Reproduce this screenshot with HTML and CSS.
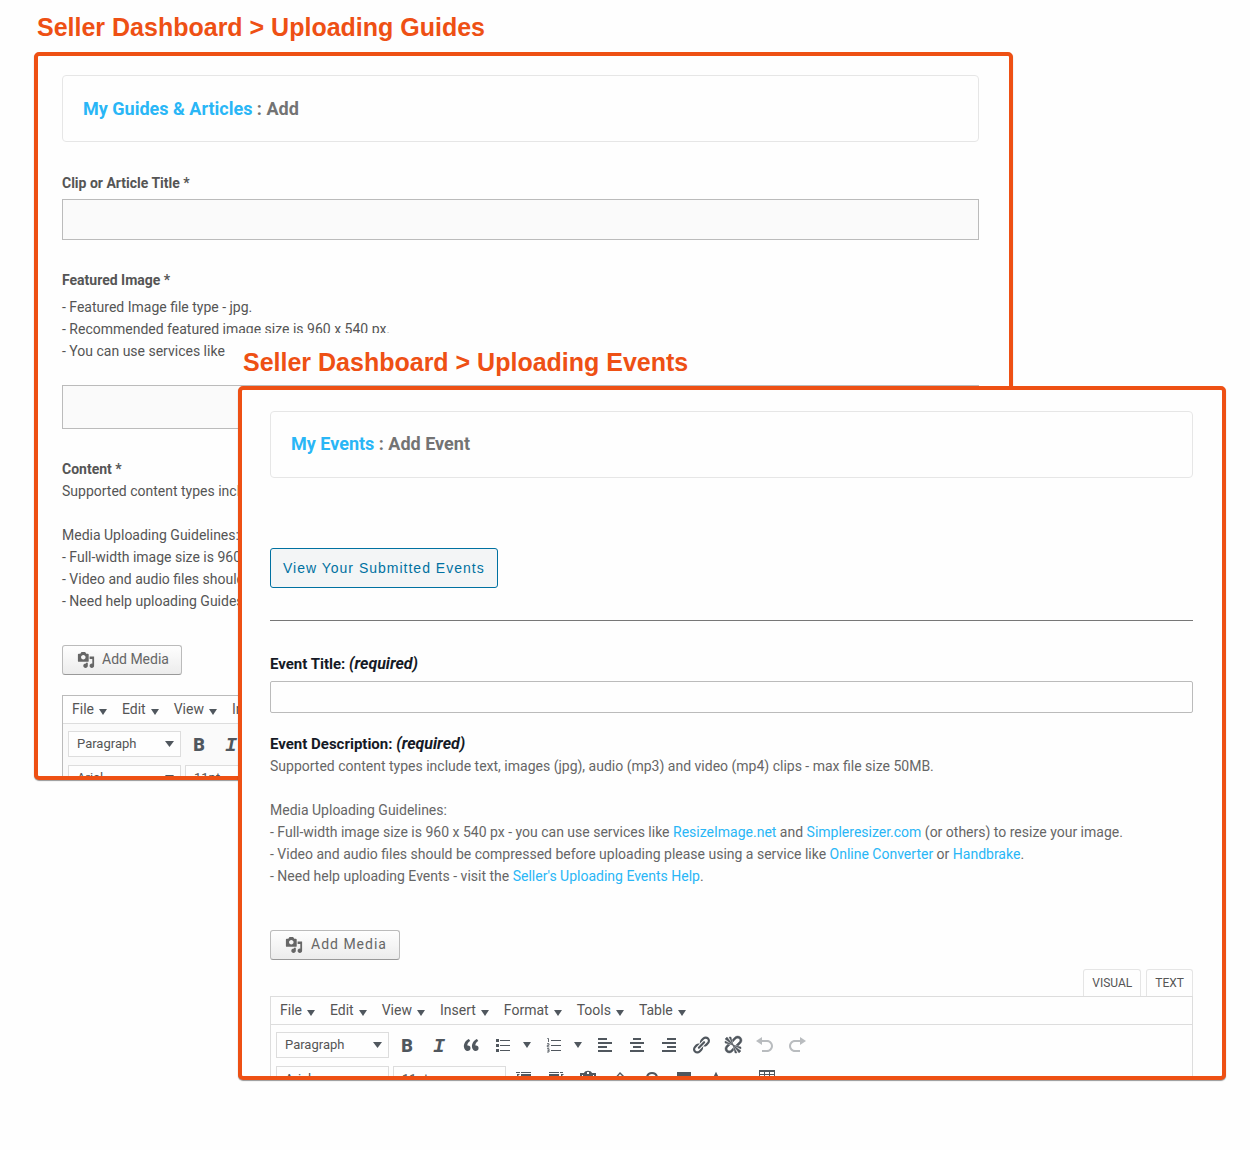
FILE: index.html
```html
<!DOCTYPE html>
<html lang="en">
<head>
<meta charset="utf-8">
<title>Seller Dashboard</title>
<link rel="stylesheet" href="styles.css">
</head>
<body>
<svg class="defs" aria-hidden="true">
  <symbol id="media" viewBox="0 0 20 20"><path d="M13 11V4c0-.55-.45-1-1-1h-1.67L9 1H5L3.67 3H2c-.55 0-1 .45-1 1v7c0 .55.45 1 1 1h10c.55 0 1-.45 1-1zM7 4.5c1.38 0 2.5 1.12 2.5 2.5S8.38 9.5 7 9.5 4.5 8.38 4.5 7 5.62 4.5 7 4.5zM14 6h5v10.5c0 1.38-1.12 2.5-2.5 2.5S14 17.88 14 16.5s1.12-2.5 2.5-2.5c.17 0 .34.02.5.05V9h-3V6zm-4 8.05V13h2v3.5c0 1.38-1.12 2.5-2.5 2.5S7 17.88 7 16.5 8.12 14 9.5 14c.17 0 .34.02.5.05z"/></symbol>
  <symbol id="quote" viewBox="0 0 20 20"><path d="M9.49 13.22c0-.74-.2-1.38-.61-1.9-.62-.78-1.83-.88-2.53-.72-.29-1.65 1.11-3.75 2.92-4.65L7.88 4c-2.73 1.3-5.42 4.28-4.96 8.05C3.21 14.43 4.59 16 6.54 16c.85 0 1.56-.25 2.12-.75s.83-1.18.83-2.03zm8.05 0c0-.74-.2-1.38-.61-1.9-.63-.78-1.83-.88-2.53-.72-.29-1.65 1.11-3.75 2.92-4.65L15.93 4c-2.73 1.3-5.41 4.28-4.95 8.05.29 2.38 1.66 3.95 3.61 3.95.85 0 1.56-.25 2.12-.75s.83-1.18.83-2.03z"/></symbol>
  <symbol id="ul" viewBox="0 0 20 20"><path d="M3 4h3v3H3zM3 9h3v3H3zM3 14h3v3H3zM7 5h10v1H7zM7 10h10v1H7zM7 15h10v1H7z"/></symbol>
  <symbol id="ol" viewBox="0 0 20 20"><path d="M7 5h10v1H7zM7 10h10v1H7zM7 15h10v1H7z"/><path d="M3.300 3.500h1.200v3.500M3 8.700h2v1.600h-1.700v1.600h2M3 13.700h2v3.300h-2M3.500 15.300h1.500" fill="none" stroke="currentColor" stroke-width=".9"/></symbol>
  <symbol id="left" viewBox="0 0 20 20"><path d="M3 3h9v2H3zM3 7h14v2H3zM3 11h9v2H3zM3 15h14v2H3z"/></symbol>
  <symbol id="center" viewBox="0 0 20 20"><path d="M6 3h8v2H6zM3 7h14v2H3zM6 11h8v2H6zM3 15h14v2H3z"/></symbol>
  <symbol id="right" viewBox="0 0 20 20"><path d="M8 3h9v2H8zM3 7h14v2H3zM8 11h9v2H8zM3 15h14v2H3z"/></symbol>
  <symbol id="link" viewBox="0 0 20 20"><path d="M17.74 2.76c1.68 1.69 1.68 4.41 0 6.1l-1.53 1.52c-1.12 1.12-2.7 1.47-4.14 1.09l2.62-2.61.76-.77.76-.76c.84-.84.84-2.2 0-3.04-.84-.85-2.2-.85-3.04 0l-.77.76-3.38 3.38c-.37-1.44-.02-3.02 1.1-4.14l1.52-1.53c1.69-1.68 4.42-1.68 6.1 0zM8.59 13.43l5.34-5.34c.42-.42.42-1.1 0-1.52-.44-.43-1.13-.39-1.53 0l-5.33 5.34c-.42.42-.42 1.1 0 1.52.44.43 1.13.39 1.52 0zm-.76 2.29l4.14-4.15c.38 1.44.03 3.02-1.09 4.14l-1.52 1.53c-1.69 1.68-4.41 1.68-6.1 0-1.68-1.68-1.68-4.42 0-6.1l1.53-1.52c1.12-1.12 2.7-1.47 4.14-1.1l-4.14 4.15c-.85.84-.85 2.2 0 3.05.84.84 2.2.84 3.04 0z"/></symbol>
  <symbol id="unlink" viewBox="0 0 20 20"><path stroke="currentColor" stroke-width=".4" d="M17.74 2.26c1.68 1.69 1.68 4.41 0 6.1l-1.53 1.52c-.32.33-.69.58-1.08.77L13 10l1.69-1.64.76-.77.76-.76c.84-.84.84-2.2 0-3.04-.84-.85-2.2-.85-3.04 0l-.77.76-.76.76L10 7l-.65-2.14c.19-.38.44-.75.77-1.07l1.52-1.53c1.69-1.68 4.42-1.68 6.1 0zM2 4l8 6-6-8zm4-2l4 8-2-8H6zM2 6l8 4-8-2V6zm7.36 7.69L10 13l.74 2.35-1.38 1.39c-1.69 1.68-4.41 1.68-6.1 0-1.68-1.68-1.68-4.42 0-6.1l1.39-1.38L7 10l-.69.64-1.52 1.53c-.85.84-.85 2.2 0 3.04.84.85 2.2.85 3.04 0zM18 16l-8-6 6 8zm-4 2l-4-8 2 8h2zm4-4l-8-4 8 2v2z"/></symbol>
  <symbol id="undo" viewBox="0 0 20 20"><path d="M12 5H7V2L1 6l6 4V7h5c2.200 0 4 1.800 4 4s-1.800 4-4 4H7v2h5c3.300 0 6-2.700 6-6s-2.700-6-6-6z"/></symbol>
  <symbol id="redo" viewBox="0 0 20 20"><path d="M8 5h5V2l6 4-6 4V7H8c-2.200 0-4 1.800-4 4s1.800 4 4 4h5v2H8c-3.300 0-6-2.700-6-6s2.700-6 6-6z"/></symbol>
  <symbol id="outdent" viewBox="0 0 20 20"><path d="M2 3h4v1H2zM7 3h10v1H7zM3 5h3L3 8zM7 5h10v2H7zM7 9h10v2H7zM7 13h10v2H7z"/></symbol>
  <symbol id="indent" viewBox="0 0 20 20"><path d="M14 3h3v1h-3zM3 3h10v1H3zM15 5h3l-3 3zM3 5h10v2H3zM3 9h10v2H3zM3 13h10v2H3z"/></symbol>
  <symbol id="paste" viewBox="0 0 20 20"><path d="M6 4c1-3 7-3 8 0h4v14H2V4zM4 6v10h12V6h-1v2H5V6zM9 3v2h2V3z" fill-rule="evenodd"/></symbol>
  <symbol id="eraser" viewBox="0 0 20 20"><path d="M10 3l6 6-7 8-6-6zM10 5l-5 6 4 4 5-6z" fill-rule="evenodd"/></symbol>
  <symbol id="omega" viewBox="0 0 20 20"><path d="M4 16h4c-5-4-4-12 2-12s7 8 2 12h4" fill="none" stroke="currentColor" stroke-width="2"/></symbol>
  <symbol id="block" viewBox="0 0 20 20"><path d="M3 3h14v12H3z"/></symbol>
  <symbol id="color" viewBox="0 0 20 20"><path d="M5 15l5-10 5 10M7 12h6" fill="none" stroke="currentColor" stroke-width="2"/></symbol>
  <symbol id="table" viewBox="0 0 20 20"><path d="M2 1h16v15H2zM3 3v2h4V3zM8 3v2h4V3zM13 3v2h4V3zM3 6v9h4V6zM8 6v9h4V6zM13 6v9h4V6z" fill-rule="evenodd"/></symbol>
</svg>
<main class="stage">
  <section class="shot guides">
    <h1 class="caption">Seller Dashboard &gt; Uploading Guides</h1>
    <div class="panel">
      <h2 class="crumb"><a href="#">My Guides &amp; Articles</a> : Add</h2>
      <label class="label" for="clip">Clip or Article Title *</label>
      <input class="field" id="clip" type="text">
      <label class="label" for="image">Featured Image *</label>
      <p class="copy hint">- Featured Image file type - jpg.<br>- Recommended featured image size is 960 x 540 px.<br>- You can use services like</p>
      <input class="field tall" id="image" type="text">
      <h3 class="label">Content *</h3>
      <p class="copy">Supported content types include</p>
      <p class="copy rules">Media Uploading Guidelines:<br>- Full-width image size is 960<br>- Video and audio files should<br>- Need help uploading Guides</p>
      <button class="media" type="button"><svg><use href="#media"/></svg>Add Media</button>
      <div class="editor">
        <div class="menubar">
          <button type="button">File</button><button type="button">Edit</button><button type="button">View</button><button type="button">Insert</button>
        </div>
        <div class="tools">
          <select aria-label="Block format"><option>Paragraph</option></select>
          <button class="tool bold" type="button">B</button>
          <button class="tool italic" type="button">I</button>
        </div>
        <div class="tools cut">
          <select aria-label="Font family"><option>Arial</option></select>
          <select aria-label="Font size"><option>11pt</option></select>
        </div>
      </div>
    </div>
  </section>

  <section class="shot events">
    <h1 class="caption">Seller Dashboard &gt; Uploading Events</h1>
    <div class="panel">
      <h2 class="crumb"><a href="#">My Events</a> : Add Event</h2>
      <button class="submitted" type="button">View Your Submitted Events</button>
      <hr class="rule">
      <label class="label" for="title">Event Title: <em>(required)</em></label>
      <input class="field" id="title" type="text">
      <h3 class="label desc">Event Description: <em>(required)</em></h3>
      <p class="copy">Supported content types include text, images (jpg), audio (mp3) and video (mp4) clips - max file size 50MB.</p>
      <p class="copy rules">Media Uploading Guidelines:<br>- Full-width image size is 960 x 540 px - you can use services like <a href="#">ResizeImage.net</a> and <a href="#">Simpleresizer.com</a> (or others) to resize your image.<br>- Video and audio files should be compressed before uploading please using a service like <a href="#">Online Converter</a> or <a href="#">Handbrake</a>.<br>- Need help uploading Events - visit the <a href="#">Seller's Uploading Events Help</a>.</p>
      <button class="media" type="button"><svg><use href="#media"/></svg>Add Media</button>
      <div class="tabs"><button type="button">VISUAL</button><button type="button">TEXT</button></div>
      <div class="editor">
        <div class="menubar">
          <button type="button">File</button><button type="button">Edit</button><button type="button">View</button><button type="button">Insert</button><button type="button">Format</button><button type="button">Tools</button><button type="button">Table</button>
        </div>
        <div class="tools">
          <select aria-label="Block format"><option>Paragraph</option></select>
          <button class="tool bold" type="button">B</button>
          <button class="tool italic" type="button">I</button>
          <button class="tool" type="button" aria-label="Blockquote"><svg><use href="#quote"/></svg></button>
          <button class="tool" type="button" aria-label="Bulleted list"><svg><use href="#ul"/></svg></button>
          <button class="more" type="button" aria-label="Bullet styles"></button>
          <button class="tool" type="button" aria-label="Numbered list"><svg><use href="#ol"/></svg></button>
          <button class="more" type="button" aria-label="Number styles"></button>
          <button class="tool" type="button" aria-label="Align left"><svg><use href="#left"/></svg></button>
          <button class="tool" type="button" aria-label="Align center"><svg><use href="#center"/></svg></button>
          <button class="tool" type="button" aria-label="Align right"><svg><use href="#right"/></svg></button>
          <button class="tool" type="button" aria-label="Insert link"><svg><use href="#link"/></svg></button>
          <button class="tool" type="button" aria-label="Remove link"><svg><use href="#unlink"/></svg></button>
          <button class="tool" type="button" aria-label="Undo" disabled><svg><use href="#undo"/></svg></button>
          <button class="tool" type="button" aria-label="Redo" disabled><svg><use href="#redo"/></svg></button>
        </div>
        <div class="tools cut">
          <select aria-label="Font family"><option>Arial</option></select>
          <select aria-label="Font size"><option>11pt</option></select>
          <button class="tool" type="button" aria-label="Decrease indent"><svg><use href="#outdent"/></svg></button>
          <button class="tool" type="button" aria-label="Increase indent"><svg><use href="#indent"/></svg></button>
          <button class="tool" type="button" aria-label="Paste as text"><svg><use href="#paste"/></svg></button>
          <button class="tool" type="button" aria-label="Clear formatting"><svg><use href="#eraser"/></svg></button>
          <button class="tool" type="button" aria-label="Special character"><svg><use href="#omega"/></svg></button>
          <button class="tool" type="button" aria-label="Horizontal line"><svg><use href="#block"/></svg></button>
          <button class="tool" type="button" aria-label="Text color"><svg><use href="#color"/></svg></button>
          <button class="more" type="button" aria-label="Color choices"></button>
          <button class="tool" type="button" aria-label="Table"><svg><use href="#table"/></svg></button>
        </div>
      </div>
    </div>
  </section>
</main>
</body>
</html>
```
FILE: styles.css
```css
* { box-sizing: border-box; }

body {
  margin: 0;
  background: #fefefe;
  color: #555;
  font: 14px/22px Roboto, sans-serif;
}

h1, h2, h3, p { margin: 0; }
a { color: #29b6f6; text-decoration: none; }
button, input, select { font: inherit; color: inherit; margin: 0; }
svg { fill: currentColor; display: block; }
.defs { position: absolute; width: 0; height: 0; }

/* The two captioned panels share one grid cell and overlap. */
.stage {
  display: grid;
  align-items: start;
  padding-bottom: 70px;
}

.shot { grid-area: 1 / 1; min-width: 0; }
.guides { margin: 0 237px 0 34px; }
.events { margin: 333px 24px 0 228px; }

.caption {
  color: #ee5014;
  font: bold 25px/52px "Liberation Sans", sans-serif;
  padding: 1px 0 0 3px;
  height: 52px;
}
.events .caption {
  width: fit-content;
  background: #fefefe;
  padding: 3px 15px 0;
}

.panel {
  display: flex;
  flex-direction: column;
  overflow: hidden;
  background: #fefefe;
  border: 4px solid #ee5014;
  border-radius: 5px;
  box-shadow: 0 1px 1px #0006;
}
.guides .panel { padding: 19px 30px 0 24px; }
.events .panel { padding: 21px 29px 0 28px; margin: 1px 0 0 10px; }

.crumb {
  border: 1px solid #e6e6e6;
  border-radius: 4px;
  padding: 22px 20px 21px;
  font-size: 18px;
  line-height: 22px;
  font-weight: 700;
  color: #737373;
}
.events .crumb { padding: 21px 20px 22px; }

.label { font-size: 14px; font-weight: 700; line-height: 22px; }
.guides .label { margin-top: 29px; }
.guides .crumb + .label { margin-top: 30px; }
.events .label { color: #151a26; font-size: 15px; }
.events .label em { font-size: 16px; line-height: 20px; }
.events .desc { margin-top: 20px; }

.field {
  height: 41px;
  margin-top: 5px;
  padding: 4px 10px;
  background: #fafafa;
  border: 1px solid #bbb;
}
.guides .tall { height: 44px; margin-top: 23px; }
.events .field {
  height: 32px;
  margin-top: 6px;
  background: #fefefe;
  border-radius: 2px;
}

.hint { margin-top: 5px; }
.rules { margin-top: 22px; }
.events .copy { color: #666; }

.submitted {
  align-self: flex-start;
  height: 40px;
  margin-top: 70px;
  padding: 0 12px;
  font: 14px/20px "Liberation Sans", sans-serif;
  letter-spacing: 1px;
  color: #0071a1;
  background: #f3f5f6;
  border: 1px solid #0071a1;
  border-radius: 3px;
}

.rule {
  width: 100%;
  margin: 32px 0;
  border: 0;
  border-top: 1px solid #777;
}

.media {
  align-self: flex-start;
  display: flex;
  align-items: center;
  gap: 7px;
  height: 30px;
  margin-top: 33px;
  padding: 0 12px 2px 14px;
  color: #666;
  background: linear-gradient(#fefefe, #ececec);
  border: 1px solid #bbb;
  border-bottom-color: #999;
  border-radius: 3px;
}
.media svg { width: 18px; height: 18px; margin-top: 2px; }
.events .media { letter-spacing: 1px; margin-top: 43px; gap: 8px; }

.tabs {
  display: flex;
  justify-content: flex-end;
  gap: 5px;
  margin-top: 9px;
}
.tabs button {
  height: 27px;
  padding: 0 8px;
  font-size: 12px;
  background: #fefefe;
  border: 1px solid #e5e5e5;
  border-bottom: 0;
  border-radius: 3px 3px 0 0;
}

.editor { border: 1px solid #ddd; border-bottom: 0; }
.guides .editor {
  margin-top: 20px;
  background: #fafafa;
  border-color: #bbb;
}

.menubar {
  display: flex;
  gap: 15px;
  height: 28px;
  padding-left: 9px;
  background: #fefefe;
  border-bottom: 1px solid #ddd;
}
.menubar button {
  display: flex;
  align-items: center;
  gap: 5px;
  padding: 0 0 2px;
  background: none;
  border: 0;
}
.menubar button::after, .more::after {
  content: "";
  border: solid transparent;
  border-width: 6px 4px 0;
  border-top-color: #50575e;
}
.menubar button::after { margin-top: 6px; }

.tools {
  display: flex;
  height: 34px;
  padding: 7px 0 0 5px;
  color: #50575e;
}
.tools.cut { height: 17px; overflow: hidden; }
.guides .cut { height: 18px; }

.tools select {
  appearance: none;
  flex: none;
  width: 113px;
  height: 26px;
  margin-right: 2px;
  padding: 0 8px;
  color: #555;
  font-size: 13px;
  background: #fefefe url("data:image/svg+xml,%3Csvg xmlns='http://www.w3.org/2000/svg' width='9' height='6'%3E%3Cpath d='M0 0h9L4.500 6z' fill='%2350575e'/%3E%3C/svg%3E") no-repeat right 6px center;
  border: 1px solid #ddd;
  border-radius: 0;
}
.tools select + select { margin-left: 2px; }

.tool {
  flex: none;
  display: flex;
  align-items: center;
  justify-content: center;
  width: 32px;
  height: 26px;
  padding: 0;
  background: none;
  border: 0;
}
.tool svg { width: 20px; height: 20px; }
.tool:disabled { color: #b9bcbf; }
.bold { font-size: 18px; font-weight: 900; padding-top: 2px; }
.italic { font: italic bold 20px/26px "Liberation Mono", monospace; padding-top: 3px; }

.more {
  display: flex;
  flex: none;
  align-items: center;
  justify-content: center;
  width: 15px;
  height: 26px;
  margin-right: 4px;
  padding: 0;
  background: none;
  border: 0;
}
```
